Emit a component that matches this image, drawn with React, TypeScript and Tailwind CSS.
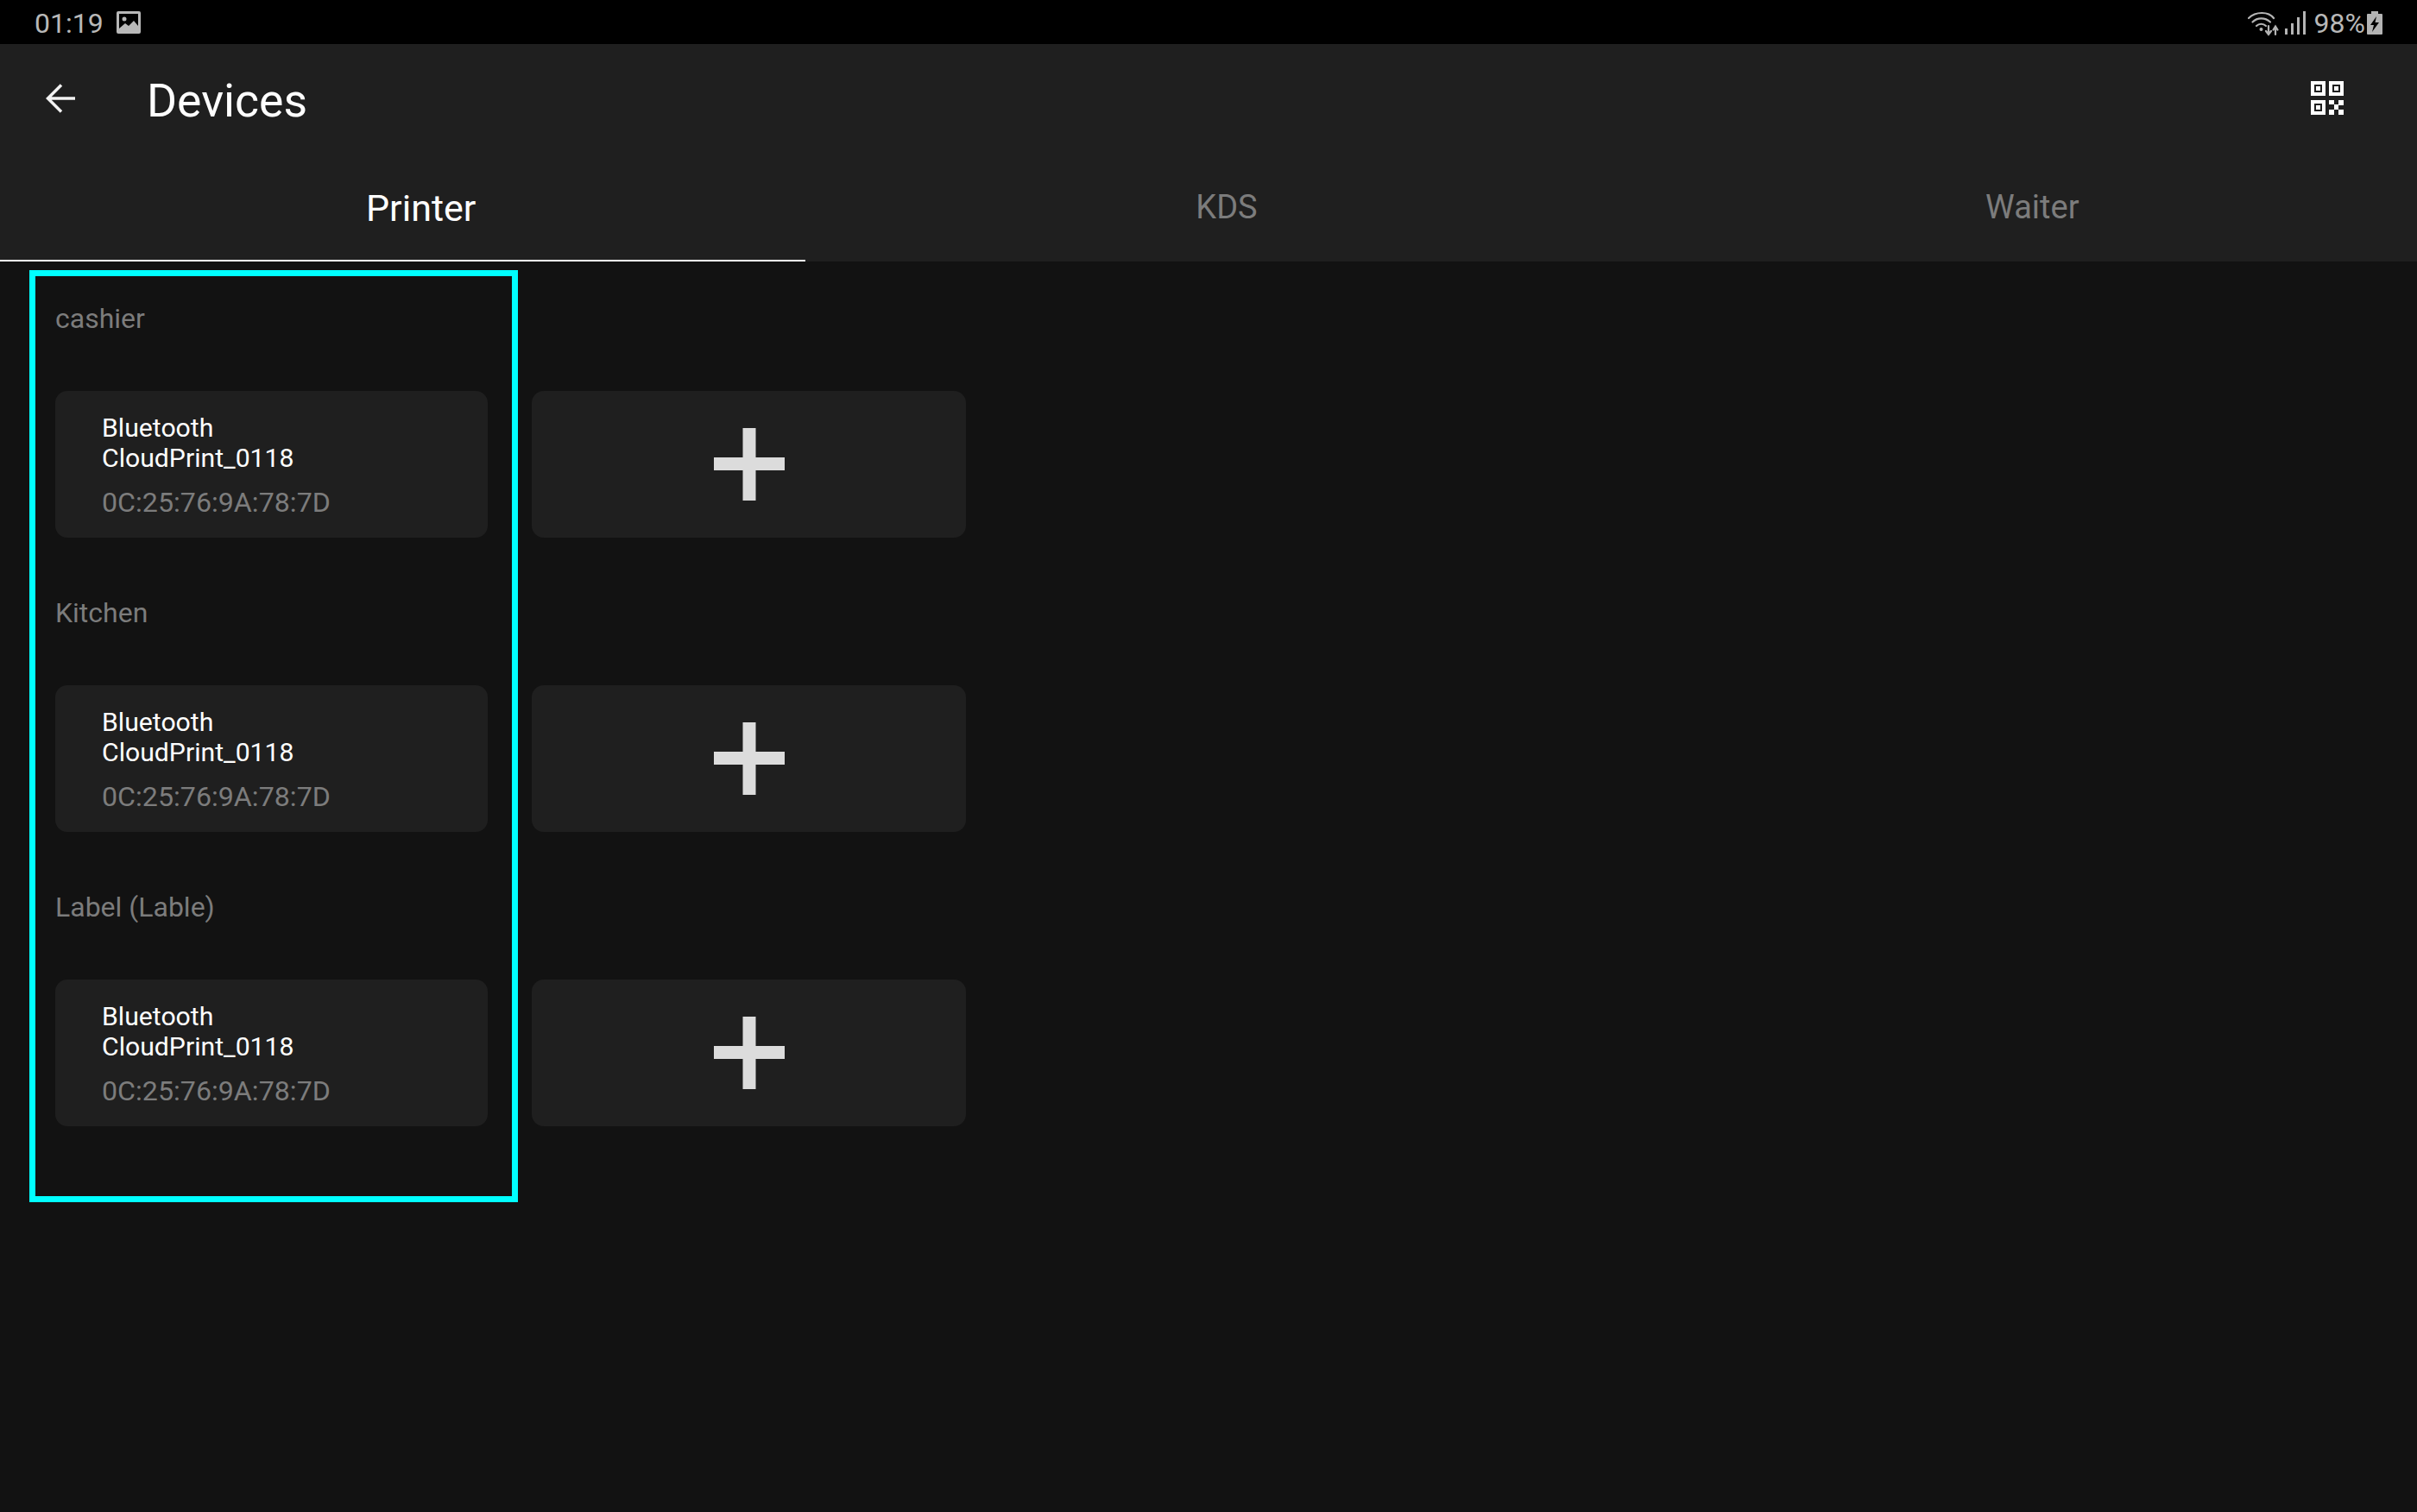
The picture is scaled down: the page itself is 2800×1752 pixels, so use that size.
const font = "font-['Roboto','Liberation_Sans',sans-serif]";

function WifiIcon() {
  return (
    <svg width="36" height="30" viewBox="0 0 36 30" fill="none" stroke="#b4b4b4" strokeWidth="2.2" strokeLinecap="round">
      <path d="M1 9C9 1 24 1 30 9" />
      <path d="M5.500 13.500C11 8 20 8 26 13.500" />
      <path d="M10 18C13 15 18 15 21 18" />
      <circle cx="15.500" cy="22" r="2" fill="#b4b4b4" stroke="none" />
      <path d="M24 18V27M21 24L24 28L27 24" />
      <path d="M32 28V20M29.500 22.500L32 18.500L34.500 22.500" />
    </svg>
  );
}

function SignalIcon() {
  return (
    <svg width="24" height="27" viewBox="0 0 24 27" fill="#b4b4b4">
      <rect x="0" y="20" width="3" height="7" />
      <rect x="7" y="14" width="3" height="13" />
      <rect x="14" y="7" width="3" height="20" />
      <rect x="21" y="0" width="3" height="27" />
    </svg>
  );
}

function BatteryIcon() {
  return (
    <svg width="18" height="27" viewBox="0 0 18 27">
      <path d="M5 0H13V3H17Q18 3 18 4V26Q18 27 17 27H1Q0 27 0 26V4Q0 3 1 3H5Z" fill="#b4b4b4" />
      <path d="M11 6L4 16H8L6 24L14 13H9.500Z" fill="#000" />
    </svg>
  );
}

function ImageIcon() {
  return (
    <svg width="28" height="27" viewBox="0 0 28 27">
      <rect width="28" height="26" rx="2" fill="#b8b8b8" />
      <rect x="3" y="3" width="22" height="20" fill="#000" />
      <circle cx="9" cy="9" r="2.500" fill="#b8b8b8" />
      <path d="M3 20L10 14L14 17L20 11L25 17V23H3Z" fill="#b8b8b8" />
    </svg>
  );
}

function QrIcon() {
  return (
    <svg width="38" height="39" viewBox="0 0 38 39" fill="#fff">
      <path fillRule="evenodd" d="M0 0H17V17H0ZM4 4V13H13V4Z" />
      <rect x="6" y="6" width="5" height="5" />
      <path fillRule="evenodd" d="M21 0H38V17H21ZM25 4V13H34V4Z" />
      <rect x="27" y="6" width="5" height="5" />
      <path fillRule="evenodd" d="M0 22H17V39H0ZM4 26V35H13V26Z" />
      <rect x="6" y="28" width="5" height="5" />
      <path d="M21 22H27V27H21ZM32 22H38V28H32ZM27 27H32V33H27ZM21 33H27V39H21ZM32 33H38V39H32Z" />
    </svg>
  );
}

function BackIcon() {
  return (
    <svg width="34" height="34" viewBox="0 0 34 34" fill="none" stroke="#f2f2f2" strokeWidth="3.500">
      <path d="M34 17H2M18 1.500L2.500 17L18 32.500" />
    </svg>
  );
}

function PlusCard() {
  return (
    <button className="flex h-[170px] w-[503px] items-center justify-center rounded-[14px] bg-[#1f1f1f]">
      <svg width="82" height="84" viewBox="0 0 82 84" fill="#dcdcdc">
        <rect x="33.500" y="0" width="15" height="84" />
        <rect x="0" y="34" width="82" height="15" />
      </svg>
    </button>
  );
}

function DeviceRow({ label }: { label: string }) {
  return (
    <section className="h-[341px]">
      <div className="h-[139px] pt-[39px] text-[32px] leading-none text-[#7c7c7c]">{label}</div>
      <div className="flex gap-[51px]">
        <div className="flex h-[170px] w-[501px] flex-col rounded-[14px] bg-[#1f1f1f] pl-[54px] pt-[25px]">
          <div className="text-[30.2px] leading-[35px] text-white">
            Bluetooth
            <br />
            CloudPrint_0118
          </div>
          <div className="mt-[16px] text-[32.2px] leading-[36px] text-[#7c7c7c]">0C:25:76:9A:78:7D</div>
        </div>
        <PlusCard />
      </div>
    </section>
  );
}

export default function App() {
  return (
    <div className={`relative flex h-[1752px] w-[2800px] flex-col overflow-hidden bg-[#121212] ${font}`}>
      {/* status bar */}
      <div className="flex h-[51px] items-center justify-between bg-black pl-[40px] pr-[40px] pt-[2px] text-[#b8b8b8]">
        <div className="flex items-center gap-[15px]">
          <span className="text-[32px] leading-none">01:19</span>
          <ImageIcon />
        </div>
        <div className="flex items-center">
          <WifiIcon />
          <div className="ml-[7px]">
            <SignalIcon />
          </div>
          <div className="ml-[10px] flex items-center gap-[2px]">
            <span className="text-[32px] leading-none">98%</span>
            <BatteryIcon />
          </div>
        </div>
      </div>

      {/* toolbar */}
      <div className="flex h-[125px] items-center justify-between bg-[#1f1f1f] pl-[53px] pr-[85px]">
        <div className="flex items-center gap-[83px]">
          <BackIcon />
          <h1 className="pt-[7px] text-[53.5px] font-normal leading-none text-white">Devices</h1>
        </div>
        <QrIcon />
      </div>

      {/* tabs */}
      <div className="grid h-[127px] grid-cols-3 bg-[#1f1f1f]">
        <div className="flex items-center justify-center border-b-2 border-white pl-[42px] pt-[6px] text-[43px] leading-none text-white">
          Printer
        </div>
        <div className="flex items-center justify-center pl-[42px] pt-[1px] text-[38px] leading-none text-[#7c7c7c]">KDS</div>
        <div className="flex items-center justify-center pl-[42px] text-[38px] leading-none text-[#7c7c7c]">Waiter</div>
      </div>

      {/* printer groups */}
      <div className="pl-[64px] pt-[11px]">
        <DeviceRow label="cashier" />
        <DeviceRow label="Kitchen" />
        <DeviceRow label="Label (Lable)" />
      </div>

      {/* highlight around the first column */}
      <div className="pointer-events-none absolute left-[34px] top-[313px] h-[1080px] w-[566px] border-[7px] border-[#00ffff]" />
    </div>
  );
}
